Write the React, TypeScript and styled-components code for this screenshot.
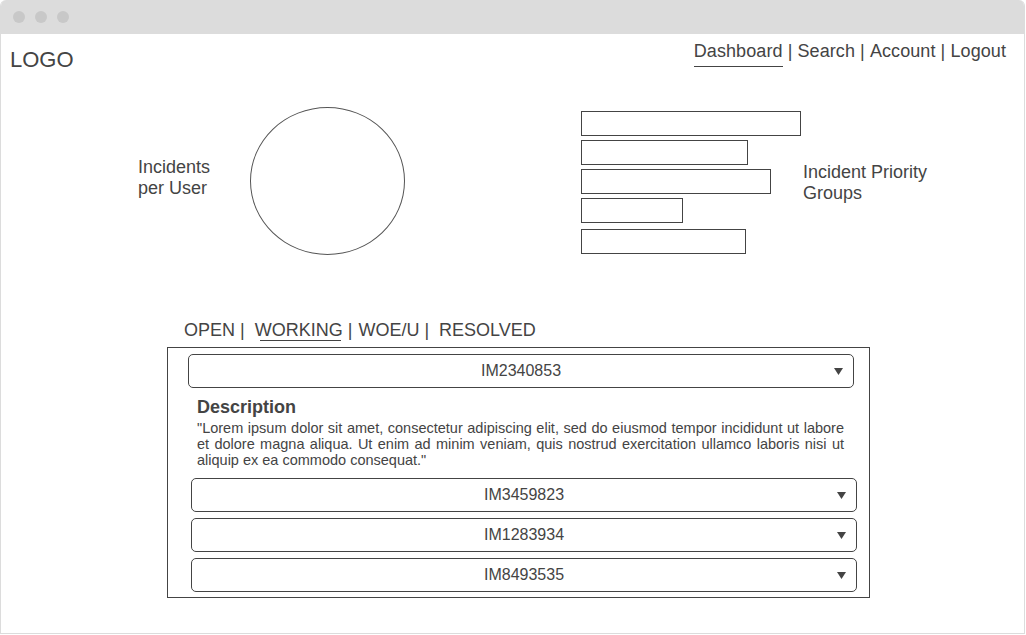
import React from "react";
import styled, { createGlobalStyle } from "styled-components";

const GlobalStyle = createGlobalStyle`
  html, body { margin: 0; padding: 0; background: #fff; }
  body { font-family: "Liberation Sans", Arial, sans-serif; color: #444; }
  * { box-sizing: border-box; }
`;

const Window = styled.div`
  width: 1025px;
  height: 634px;
  border: 1px solid #dcdcdc;
  border-top: none;
  border-radius: 6px 6px 0 0;
  display: flex;
  flex-direction: column;
  overflow: hidden;
  background: #fff;
`;

const TitleBar = styled.div`
  height: 34px;
  flex: none;
  background: #dcdcdc;
  display: flex;
  align-items: center;
  gap: 10px;
  padding-left: 12px;
`;

const Dot = styled.span`
  width: 12px;
  height: 12px;
  border-radius: 50%;
  background: #c8c8c8;
`;

const Header = styled.header`
  display: flex;
  justify-content: space-between;
  align-items: flex-start;
  padding: 0 18px 0 9px;
`;

const Logo = styled.div`
  font-size: 22px;
  line-height: 26px;
  margin-top: 13px;
`;

const Nav = styled.nav`
  display: flex;
  font-size: 18px;
  line-height: 22px;
  padding-top: 6px;
  letter-spacing: 0.08px;
  white-space: pre;
`;

const NavLink = styled.span<{ $active?: boolean }>`
  padding-bottom: 4px;
  border-bottom: 1px solid ${(p) => (p.$active ? "#444" : "transparent")};
`;

const ChartRow = styled.section`
  display: flex;
  align-items: center;
  margin-top: 34px;
  padding-left: 137px;
`;

const ChartGroup = styled.div<{ $gap: number; $offset?: number }>`
  display: flex;
  align-items: center;
  gap: ${(p) => p.$gap}px;
  margin-left: ${(p) => p.$offset ?? 0}px;
`;

const ChartLabel = styled.div<{ $width: number; $lift?: number }>`
  width: ${(p) => p.$width}px;
  font-size: 18px;
  line-height: 21px;
  margin-bottom: ${(p) => p.$lift ?? 0}px;
`;

const Ellipse = styled.div`
  width: 155px;
  height: 148px;
  border: 1px solid #555;
  border-radius: 50%;
`;

const Bars = styled.div`
  display: flex;
  flex-direction: column;
  gap: 4px;
  margin-top: 2px;
`;

const Bar = styled.div<{ $w: number; $extra?: number }>`
  width: ${(p) => p.$w}px;
  height: 25px;
  border: 1px solid #444;
  margin-top: ${(p) => p.$extra ?? 0}px;
`;

const Tabs = styled.div`
  margin-top: 64px;
  padding-left: 183px;
  font-size: 18px;
  line-height: 22px;
  white-space: pre;
  display: flex;
`;

const Tab = styled.span<{ $active?: boolean }>`
  position: relative;
  margin-left: ${(p) => (p.$active ? 5 : 0)}px;
  &::after {
    content: "";
    display: ${(p) => (p.$active ? "block" : "none")};
    position: absolute;
    left: 5px;
    right: 2px;
    bottom: 0;
    height: 1px;
    background: #444;
  }
`;

const Sep = styled.span<{ $extra?: number }>`
  margin-right: ${(p) => p.$extra ?? 0}px;
`;

const Panel = styled.section`
  margin: 6px 0 0 166px;
  width: 703px;
  border: 1px solid #444;
  padding: 6px 0 5px;
  display: flex;
  flex-direction: column;
`;

const Dropdown = styled.div<{ $ml: number; $mr: number }>`
  height: 34px;
  margin: 0 ${(p) => p.$mr}px 0 ${(p) => p.$ml}px;
  border: 1px solid #444;
  border-radius: 5px;
  display: grid;
  grid-template-columns: 1fr auto 1fr;
  align-items: center;
  font-size: 16px;
`;

const DropText = styled.span`
  grid-column: 2;
`;

const Arrow = styled.svg`
  grid-column: 3;
  justify-self: end;
  margin-right: 10px;
`;

const Description = styled.div`
  margin-top: 8px;
  padding: 0 25px 0 29px;
`;

const DescTitle = styled.h3`
  margin: 0;
  font-size: 18px;
  line-height: 22px;
  font-weight: bold;
`;

const DescText = styled.p`
  margin: 2px 0 0;
  font-size: 14.5px;
  line-height: 16px;
  text-align: justify;
`;

const DropList = styled.div`
  margin-top: 10px;
  display: flex;
  flex-direction: column;
  gap: 6px;
`;

const Caret = () => (
  <Arrow width="9" height="7" viewBox="0 0 9 7">
    <path d="M0 0 L9 0 L4.5 7 Z" fill="#444" />
  </Arrow>
);

const Select = ({ id, ml, mr }: { id: string; ml: number; mr: number }) => (
  <Dropdown $ml={ml} $mr={mr}>
    <DropText>{id}</DropText>
    <Caret />
  </Dropdown>
);

export default function App() {
  return (
    <>
      <GlobalStyle />
      <Window>
        <TitleBar>
          <Dot />
          <Dot />
          <Dot />
        </TitleBar>
        <Header>
          <Logo>LOGO</Logo>
          <Nav>
            <NavLink $active>Dashboard</NavLink>
            <span> | </span>
            <NavLink>Search</NavLink>
            <span> | </span>
            <NavLink>Account</NavLink>
            <span> | </span>
            <NavLink>Logout</NavLink>
          </Nav>
        </Header>
        <ChartRow>
          <ChartGroup $gap={38}>
            <ChartLabel $width={74} $lift={7}>
              Incidents
              <br />
              per User
            </ChartLabel>
            <Ellipse />
          </ChartGroup>
          <ChartGroup $gap={2} $offset={176}>
            <Bars>
              <Bar $w={220} />
              <Bar $w={167} />
              <Bar $w={190} />
              <Bar $w={102} />
              <Bar $w={165} $extra={2} />
            </Bars>
            <ChartLabel $width={150} $lift={-4}>
              Incident Priority
              <br />
              Groups
            </ChartLabel>
          </ChartGroup>
        </ChartRow>
        <Tabs>
          <Tab>OPEN | </Tab>
          <Tab $active>WORKING</Tab>
          <Sep $extra={1}> | </Sep>
          <Tab>WOE/U</Tab>
          <Sep $extra={5}> | </Sep>
          <Tab>RESOLVED</Tab>
        </Tabs>
        <Panel>
          <Select id="IM2340853" ml={20} mr={15} />
          <Description>
            <DescTitle>Description</DescTitle>
            <DescText>
              "Lorem ipsum dolor sit amet, consectetur adipiscing elit, sed do eiusmod tempor
              incididunt ut labore et dolore magna aliqua. Ut enim ad minim veniam, quis nostrud
              exercitation ullamco laboris nisi ut aliquip ex ea commodo consequat."
            </DescText>
          </Description>
          <DropList>
            <Select id="IM3459823" ml={23} mr={12} />
            <Select id="IM1283934" ml={23} mr={12} />
            <Select id="IM8493535" ml={23} mr={12} />
          </DropList>
        </Panel>
      </Window>
    </>
  );
}
